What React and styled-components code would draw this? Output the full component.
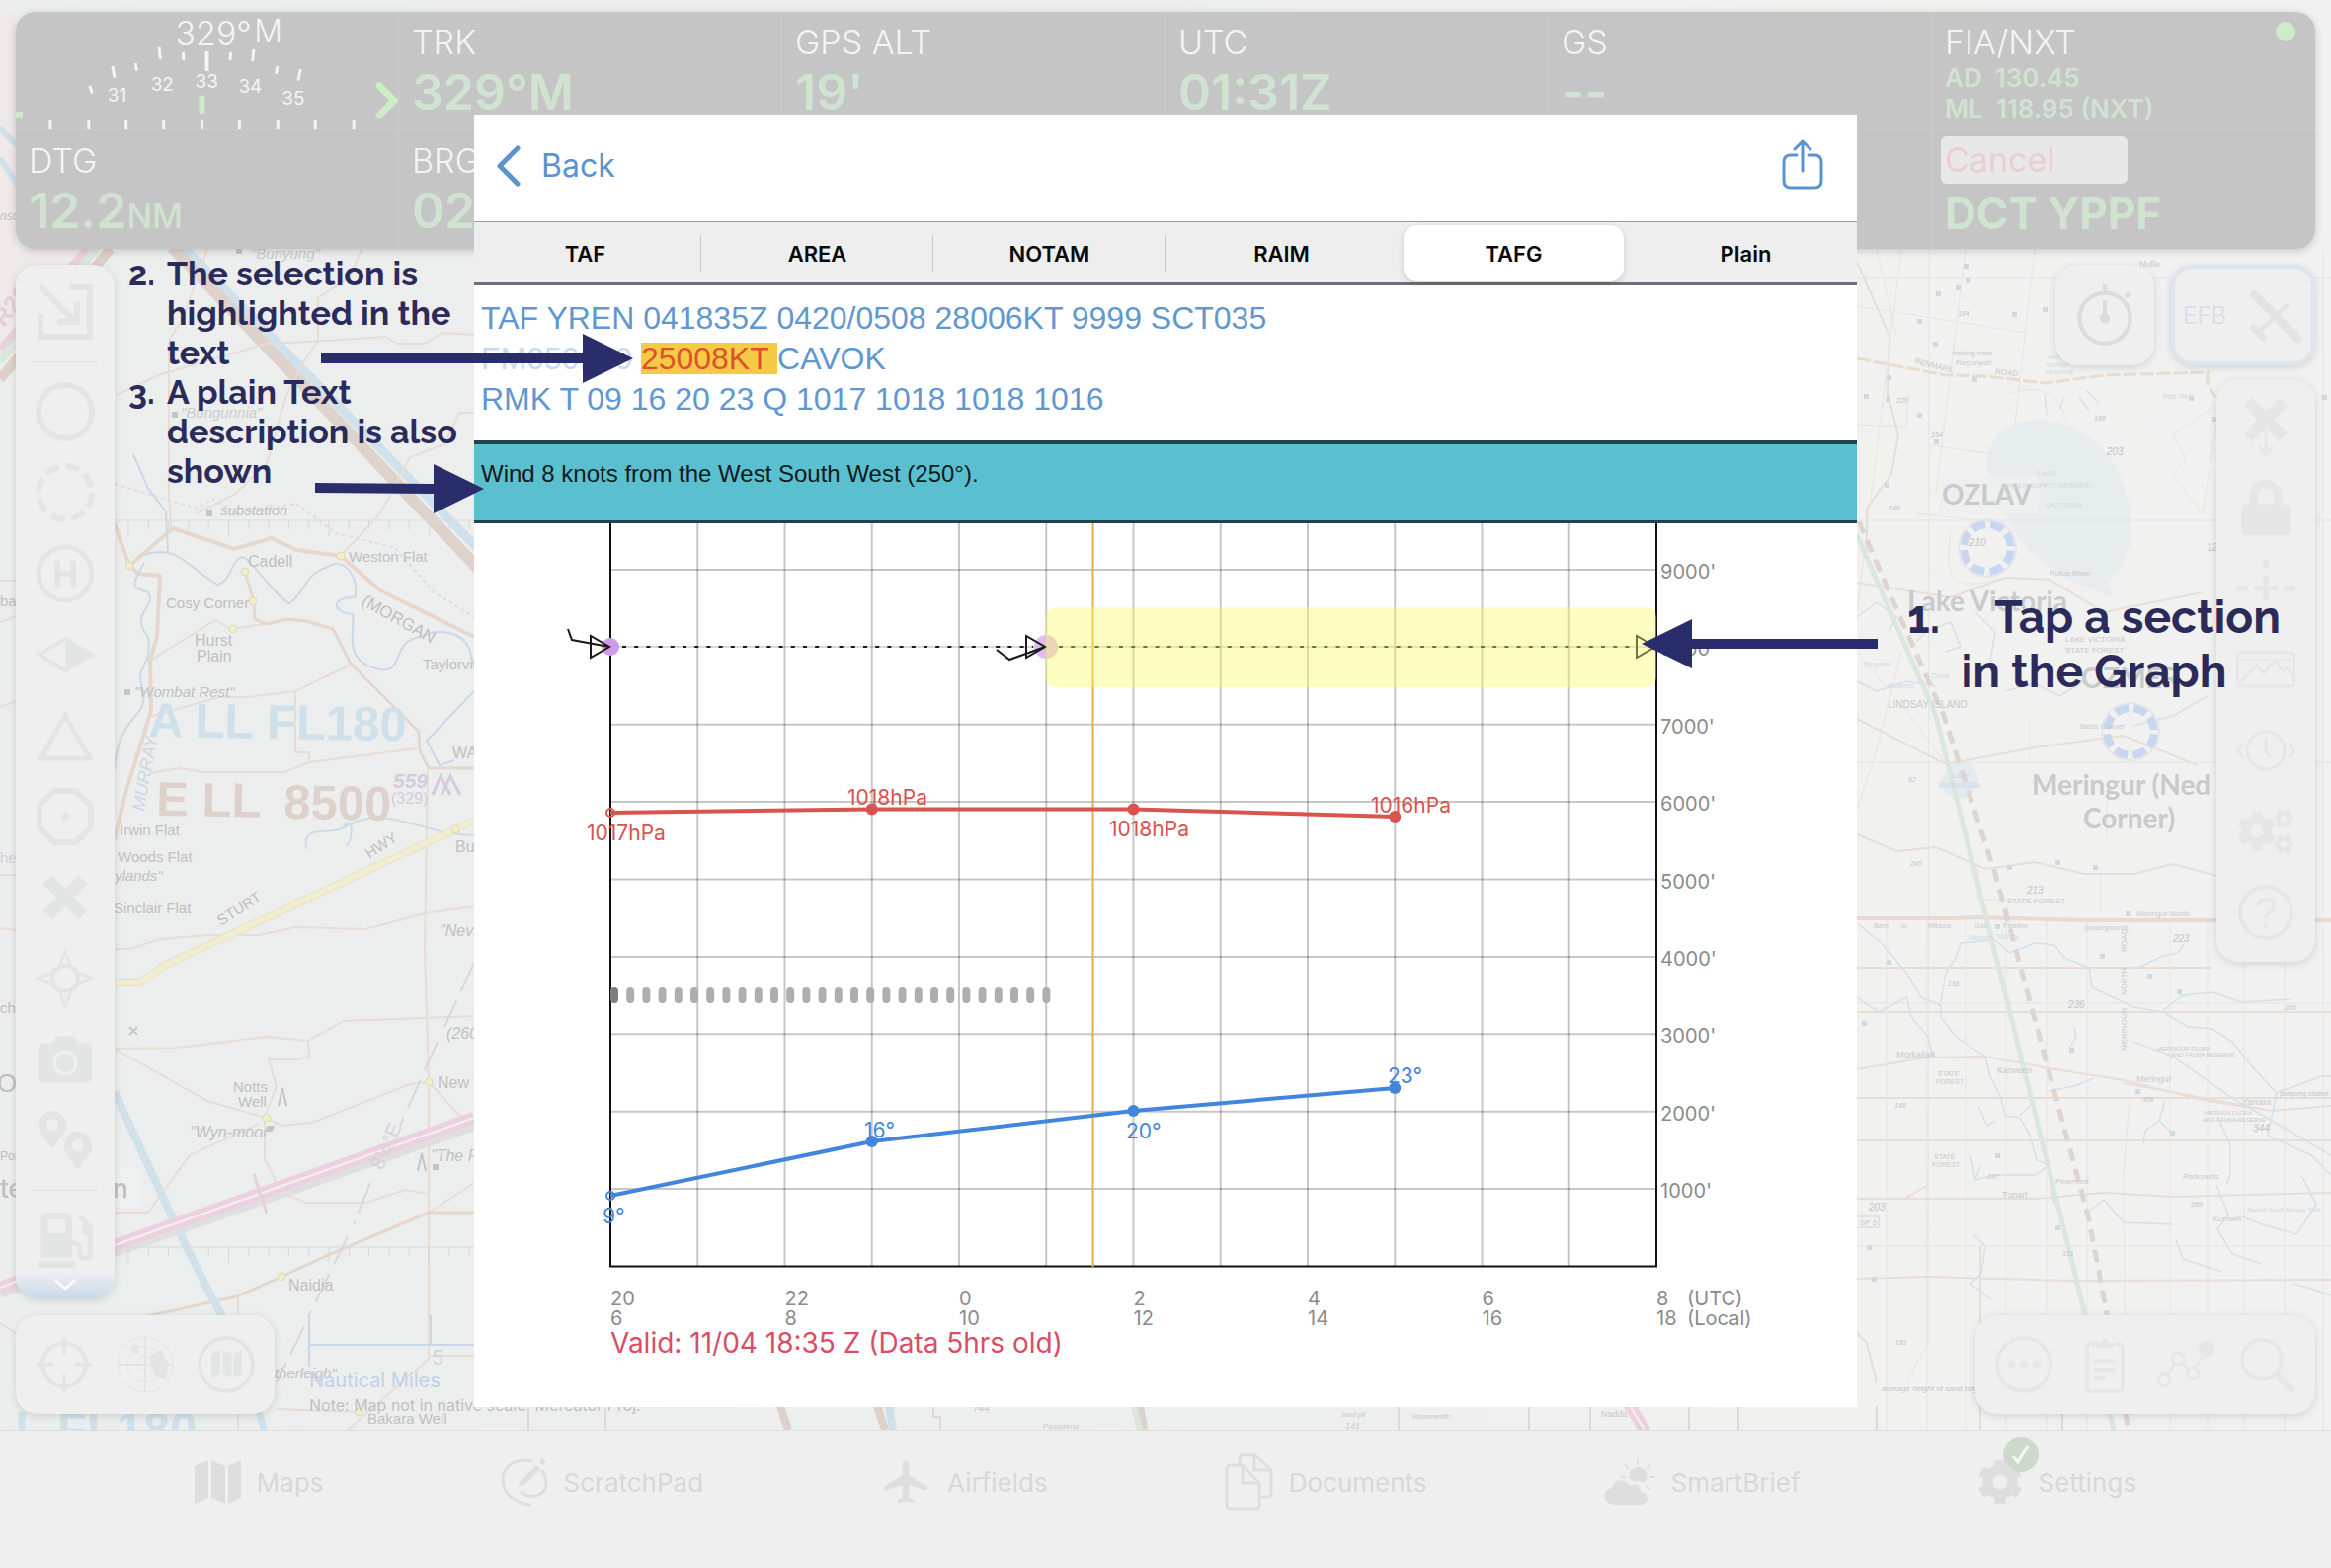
import React from 'react';
import styled, { createGlobalStyle, css } from 'styled-components';
import { FaCamera, FaCog, FaCogs, FaGasPump, FaLock, FaMapMarkerAlt } from 'react-icons/fa';
import { MdAirplanemodeActive } from 'react-icons/md';

const ui = `Inter, Roboto, "Liberation Sans", sans-serif`;
const arial = `"Liberation Sans", Arial, sans-serif`;
const note = `Raleway, Lato, "Open Sans", sans-serif`;
const navy = '#2a2d6b';

const Global = createGlobalStyle`
  *, *::before, *::after { box-sizing: border-box; }
  body { margin: 0; background: #edeeee; font-family: ${ui}; }
  button { font: inherit; color: inherit; background: none; border: 0; padding: 0; margin: 0; cursor: pointer; }
  ol { list-style: none; margin: 0; padding: 0; }
`;

const Screen = styled.div`
  position: relative;
  min-height: 100vh;
  display: grid;
  grid-template-rows: 1fr auto;
  overflow: hidden;
`;

const MapCanvas = styled.svg`
  position: absolute;
  inset: 0;
  width: 100%;
  height: 100%;
`;

const Stage = styled.main`
  position: relative;
  display: flex;
  flex-direction: column;
  gap: 16px;
  padding: 12px 16px 16px;
`;

/* ---------- instrument header ---------- */
const Instruments = styled.header`
  display: grid;
  grid-template-columns: repeat(6, 1fr);
  grid-auto-rows: 120px;
  background: #c5c5c5;
  border-radius: 20px;
  box-shadow: 0 2px 8px rgba(0, 0, 0, 0.18);
  overflow: hidden;
`;

const Cell = styled.div`
  position: relative;
  padding: ${(p) => (p.$flush ? '0' : '11px 0 0 13px')};
  border-right: ${(p) => (p.$last ? '0' : '1px solid #cccccc')};
  border-bottom: ${(p) => (p.$low ? '0' : '1px solid #cccccc')};
  white-space: nowrap;
`;

const CellLabel = styled.div`
  font-size: 34px;
  line-height: 40px;
  font-weight: 300;
  color: #f4f4f4;
`;

const CellValue = styled.div`
  font-size: ${(p) => (p.$route ? '44px' : '50px')};
  line-height: 60px;
  font-weight: ${(p) => (p.$route ? 700 : 600)};
  color: #d0e3d0;
  small { font-size: 34px; font-weight: 500; }
`;

const Frequency = styled.div`
  font-size: 26px;
  line-height: 31px;
  font-weight: 600;
  color: #d0e3d0;
  white-space: pre;
`;

const CancelButton = styled.button`
  display: block;
  width: 189px;
  height: 48px;
  margin-left: -4px;
  padding-left: 4px;
  border-radius: 6px;
  background: #e8e8e8;
  color: #ebcfcf;
  font-size: 34px;
  line-height: 48px;
  text-align: left;
`;

const RouteCell = styled(Cell)`
  padding-top: 6px;
`;

const StatusDot = styled.span`
  position: absolute;
  top: 10px;
  right: 20px;
  width: 20px;
  height: 20px;
  border-radius: 50%;
  background: #cdedc9;
`;

/* ---------- tool rails ---------- */
const Body = styled.div`
  flex: 1;
  display: flex;
  justify-content: space-between;
`;

const Side = styled.div`
  display: flex;
  flex-direction: column;
  align-items: ${(p) => (p.$end ? 'flex-end' : 'flex-start')};
  gap: 14px;
  color: ${(p) => (p.$end ? '#e6e6e6' : '#e3e4e4')};
`;

const surface = css`
  background: #efefef;
  border-radius: 22px;
  box-shadow: 0 2px 8px rgba(0, 0, 0, 0.13);
`;

const Rail = styled.nav`
  ${surface}
  width: 100px;
  display: flex;
  flex-direction: column;
  padding-top: 7px;
  padding-bottom: ${(p) => (p.$open ? '0' : '9px')};
  overflow: hidden;
`;

const Dock = styled.nav`
  ${surface}
  display: flex;
  height: 100px;
  padding: 0 8px;
  margin-top: auto;
`;

const ToolButton = styled.button`
  display: grid;
  place-items: center;
  flex: none;
  height: ${(p) => (p.$tall ? '100px' : '82px')};
  width: ${(p) => (p.$tall ? '82px' : '100%')};
  svg { display: block; }
`;

const Rule = styled.hr`
  width: 68px;
  margin: 9px auto;
  border: 0;
  border-top: 1px solid #e2e3e3;
`;

const MoreButton = styled.button`
  display: grid;
  place-items: center;
  height: 28px;
  margin-top: -10px;
  background: linear-gradient(#efefef, #c9d8ea);
`;

const Cards = styled.div`
  display: flex;
  gap: 17px;
`;

const CardButton = styled.button`
  ${surface}
  display: flex;
  align-items: center;
  justify-content: ${(p) => (p.$efb ? 'space-between' : 'center')};
  width: ${(p) => (p.$efb ? '146px' : '100px')};
  height: 102px;
  padding: ${(p) => (p.$efb ? '0 8px' : '0')};
  border: ${(p) => (p.$efb ? '4px solid #dde5ee' : '0')};
  color: #dcdcdc;
  span { color: #dbdfea; font-size: 24px; font-weight: 400; }
`;

/* ---------- bottom tab bar ---------- */
const TabBar = styled.nav`
  position: relative;
  display: flex;
  justify-content: center;
  gap: 179px;
  height: 140px;
  border-top: 1px solid #dddede;
  background: #efefef;
`;

const TabItem = styled.a`
  position: relative;
  display: flex;
  align-items: center;
  gap: 16px;
  height: 104px;
  color: #d8d8d8;
  font-size: 26px;
  text-decoration: none;
  svg { display: block; color: #dedede; }
`;

const Badge = styled.span`
  position: absolute;
  left: 26px;
  top: 6px;
  display: grid;
  place-items: center;
  width: 36px;
  height: 36px;
  border-radius: 50%;
  background: #cddacb;
`;

/* ---------- weather sheet ---------- */
const SheetLayer = styled.div`
  position: absolute;
  inset: 116px 0 auto;
  display: flex;
  justify-content: center;
`;

const Sheet = styled.section`
  width: 60%;
  max-width: 1400px;
  background: #ffffff;
  overflow: hidden;
`;

const SheetBar = styled.div`
  display: flex;
  align-items: center;
  justify-content: space-between;
  height: 109px;
  padding: 0 34px 4px 22px;
  border-bottom: 1px solid #9a9da0;
  color: #5b93d0;
`;

const BackButton = styled.button`
  display: flex;
  align-items: center;
  gap: 20px;
  font-size: 32px;
  line-height: 40px;
`;

const Segments = styled.div`
  display: grid;
  grid-template-columns: repeat(6, 1fr);
  height: 64px;
  margin: 0 -5px;
  padding-top: 3px;
  background: #eeeeee;
  border-bottom: 3px solid #6b7078;
`;

const Segment = styled.button`
  position: relative;
  height: 57px;
  margin: 0 6px;
  border-radius: 14px;
  font-size: 22px;
  font-weight: 600;
  color: #0a0a0a;
  ${(p) => p.$on && css`
    background: #ffffff;
    box-shadow: 0 2px 6px rgba(0, 0, 0, 0.15);
  `}
  ${(p) => p.$rule && css`
    &::after {
      content: '';
      position: absolute;
      top: 10px;
      bottom: 10px;
      right: -6px;
      width: 1px;
      background: #c9c9c9;
    }
  `}
`;

const Report = styled.div`
  padding: 13px 7px 21px;
  font-family: ${arial};
  font-size: 32px;
  line-height: 41px;
  color: #6197d0;
  white-space: nowrap;
`;

const Past = styled.span`
  color: #c9daed;
  text-decoration: line-through;
`;

const Picked = styled.mark`
  display: inline-block;
  line-height: 32px;
  white-space: pre;
  color: #e0502f;
  background: #f5cb45;
`;

const Plain = styled.p`
  margin: 0;
  height: 84px;
  padding: 15px 7px;
  border-top: 4px solid #24414e;
  border-bottom: 3px solid #24414e;
  background: #5abfce;
  color: #101a1c;
  font-family: ${arial};
  font-size: 24px;
  line-height: 30px;
`;

const Chart = styled.svg`
  display: block;
  width: 100%;
  height: auto;
`;

/* ---------- training notes ---------- */
const Arrows = styled.svg`
  position: absolute;
  inset: 0;
  width: 100%;
  height: 100%;
  pointer-events: none;
`;

const Steps = styled.ol`
  position: absolute;
  top: 257px;
  left: 130px;
  width: 345px;
  font-family: ${note};
  font-size: 34px;
  font-weight: 700;
  line-height: 40px;
  color: #2a2b5a;
  li { display: grid; grid-template-columns: 39px 1fr; }
`;

const FirstStep = styled.p`
  position: absolute;
  top: 598px;
  right: 51px;
  margin: 0;
  font-family: ${note};
  font-size: 46px;
  font-weight: 700;
  line-height: 55px;
  color: #2a2b5a;
  text-align: center;
  span { margin-right: 55px; }
`;

/* ---------- icons ---------- */
const Ico = ({ s = 60, w = 5, children }) => (
  <svg width={s} height={s} viewBox="0 0 60 60" fill="none" stroke="currentColor" strokeWidth={w} aria-hidden="true">
    {children}
  </svg>
);

const dashRing = (r, n, share) => {
  const c = (2 * Math.PI * r) / n;
  return `${c * share} ${c * (1 - share)}`;
};

const slabs = 'M0 6L14 0V38L0 44ZM17 0L31 6V44L17 38ZM34 6L47 0V38L34 44Z';

const MapsIcon = () => (
  <svg width="47" height="44" viewBox="0 0 47 44" fill="currentColor" aria-hidden="true"><path d={slabs} /></svg>
);

const leftTools = [
  ['Ring', <Ico w={6}><circle cx="30" cy="30" r="27" /></Ico>],
  ['Dashed ring', <Ico w={6}><circle cx="30" cy="30" r="27" strokeDasharray={dashRing(27, 8, 0.68)} /></Ico>],
  ['Helipad', <Ico w={5}><circle cx="30" cy="30" r="27" /><path d="M22 17v26M38 17v26M22 30h16" strokeWidth="6" /></Ico>],
  ['Reporting point', <Ico w={4}><path d="M3 30L30 14L57 30L30 46Z" /><path d="M30 13L58 30L30 47Z" fill="currentColor" stroke="none" /></Ico>],
  ['Triangle', <Ico w={5}><path d="M30 10L55 53H5Z" /></Ico>],
  ['Octagon', <Ico w={6}><path d="M19 4H41L56 19V41L41 56H19L4 41V19Z" /><circle cx="30" cy="30" r="4" fill="currentColor" stroke="none" /></Ico>],
  ['Cross', <Ico w={13}><path d="M12 12L48 48M48 12L12 48" /></Ico>],
  ['Waypoint', <Ico w={4}><circle cx="30" cy="30" r="13" /><path d="M30 2L36 18Q42 20 43 24L58 30L43 36Q42 40 36 43L30 58L24 43Q18 40 17 36L2 30L17 24Q18 20 24 18Z" strokeWidth="3" /></Ico>],
  ['Camera', <FaCamera size={54} />],
  ['Pins', <Ico><g stroke="none" fill="currentColor"><FaMapMarkerAlt x={-2} y={0} size={38} /><FaMapMarkerAlt x={24} y={21} size={38} /></g></Ico>],
];

const rightTools = [
  ['Drop', <Ico w={12}><path d="M12 5L48 41M48 5L12 41" /><path d="M30 34V54M23 50L30 58L37 50" strokeWidth="3" /></Ico>],
  ['Lock', <FaLock size={56} />],
  ['Crosshair', <Ico w={5}><path d="M30 0v10M30 17v26M30 50v10M0 30h12M18 30h24M48 30h12" /></Ico>],
  ['Terrain', <Ico w={3}><rect x="1" y="13" width="58" height="34" rx="4" /><path d="M3 44L20 26L28 34L40 20L47 32L52 28L58 38" /><path d="M3 20H57" strokeDasharray="5 3" strokeWidth="2" /></Ico>],
  ['Time', <Ico w={3}><circle cx="30" cy="30" r="19" /><path d="M30 17V31L35 37M7 23L1 30L7 37M53 23L59 30L53 37" /></Ico>],
  ['Options', <FaCogs size={56} />],
  ['Help', <Ico w={4}><circle cx="30" cy="30" r="26" /><path d="M22 24Q23 17 30 17Q38 17 38 24Q38 28 33 31Q30 33 30 37M30 42v4" /></Ico>],
];

const leftDock = [
  ['Centre', <Ico w={4}><circle cx="30" cy="30" r="22" /><path d="M30 2V20M30 40V58M2 30H20M40 30H58" /></Ico>],
  ['Radar', <Ico w={1}><circle cx="30" cy="30" r="28" /><circle cx="30" cy="30" r="18" /><circle cx="30" cy="30" r="8" /><path d="M30 2V58M2 30H58" strokeWidth="2" /><path d="M34 22L46 14L54 30L50 46L40 42Z" fill="currentColor" stroke="none" /><circle cx="20" cy="14" r="4" fill="currentColor" /></Ico>],
  ['Chart', <Ico w={4}><circle cx="30" cy="30" r="27" /><path d={slabs} fill="currentColor" stroke="none" transform="translate(15 15) scale(0.66)" /></Ico>],
];

const rightDock = [
  ['More', <Ico w={4}><circle cx="30" cy="30" r="27" /><g fill="currentColor" stroke="none"><circle cx="17" cy="30" r="4" /><circle cx="30" cy="30" r="4" /><circle cx="43" cy="30" r="4" /></g></Ico>],
  ['Plan', <Ico w={4}><path d="M20 9H16Q12 9 12 13V53Q12 57 16 57H44Q48 57 48 53V13Q48 9 44 9H40M19 26H41M19 35H41M19 44H31" /><path d="M21 13V8H26Q30 -1 34 8H39V13Z" fill="currentColor" stroke="none" /></Ico>],
  ['Route', <Ico w={3}><circle cx="8" cy="46" r="6" /><circle cx="22" cy="24" r="6" /><circle cx="37" cy="39" r="6" /><circle cx="51" cy="14" r="7" fill="currentColor" /><path d="M11 41L19 29M26 28L33 35M39 33L48 20" /></Ico>],
  ['Search', <Ico w={4}><circle cx="25" cy="25" r="20" /><path d="M39 40L57 57" strokeWidth="6" /></Ico>],
];

const ScratchIcon = () => (
  <svg width="48" height="50" viewBox="0 0 48 50" fill="none" stroke="currentColor" strokeWidth="3" strokeLinecap="round" aria-hidden="true">
    <path d="M29 48C12 45 2 36 2 22C3 8 16 0 31 4" />
    <path d="M42 14C49 26 46 35 38 38C31 41 26 40 21 35" />
    <path d="M17 30L20 24L36 8L40 12L24 28ZM39 5L42 1L46 4L43 8Z" fill="currentColor" stroke="none" />
  </svg>
);

const DocsIcon = () => (
  <svg width="49" height="58" viewBox="0 0 49 58" fill="none" stroke="currentColor" strokeWidth="3" aria-hidden="true">
    <path d="M15 11V6Q15 2 19 2H31L47 17V40Q47 44 43 44H37M30 2V17H46" />
    <path d="M2 16Q2 12 6 12H18L35 30V52Q35 56 31 56H6Q2 56 2 52ZM18 12V30H34" />
  </svg>
);

const BriefIcon = () => (
  <svg width="52" height="46" viewBox="0 0 52 46" fill="currentColor" aria-hidden="true">
    <path d="M10 46C-2 45 -3 31 8 29C9 20 22 18 26 27C30 24 37 26 37 33C47 35 46 45 37 46Z" />
    <path d="M26 20A9 9 0 1 1 40 24C38 22 34 21 30 23C29 21 28 21 26 20Z" />
    <path d="M34 0V6M21 5L25 10M47 5L43 10M17 18H22M46 18H52M43 26L47 31" stroke="currentColor" strokeWidth="2" />
  </svg>
);

const tabs = [
  ['Maps', <MapsIcon />],
  ['ScratchPad', <ScratchIcon />],
  ['Airfields', <MdAirplanemodeActive size={52} />],
  ['Documents', <DocsIcon />],
  ['SmartBrief', <BriefIcon />],
  ['Settings', <FaCog size={46} />],
];

const Compass = () => {
  const long = [[115, 108, -11], [162, 89, -6], [257, 91, 6], [304, 111, 12]];
  const short = [[92, 118, -16], [138, 95, -9], [186, 84, -3], [234, 84, 4], [281, 98, 9]];
  return (
    <svg width="100%" height="119" viewBox="16 12 388 119" preserveAspectRatio="xMinYMin meet" fontFamily="Inter, sans-serif" fill="#f4f4f4" role="img" aria-label="Heading 329 magnetic">
      <text x="178" y="46" fontSize="34" fontWeight="300">329°</text>
      <text x="258" y="43" fontSize="32" fontWeight="300">M</text>
      <g stroke="#f4f4f4" strokeWidth="3">
        {long.map(([x, y, a]) => <path key={x} d={`M${x} ${y - 41}v12`} transform={`rotate(${a} ${x} ${y - 36})`} />)}
        {short.map(([x, y, a]) => <path key={x} d={`M${x} ${y - 31}v8`} transform={`rotate(${a} ${x} ${y - 28})`} />)}
        <path d="M210 52v20" strokeWidth="4" />
        {[51, 90, 128, 166, 205, 243, 282, 320, 359].map((x) => <path key={x} d={`M${x} 122v12`} />)}
      </g>
      <path d="M205 97v18M16 116h7" stroke="#cdebc9" strokeWidth="6" />
      <g fontSize="19">
        <text x="109" y="103">31</text>
        <text x="153" y="92">32</text>
        <text x="198" y="89">33</text>
        <text x="242" y="94">34</text>
        <text x="286" y="106">35</text>
      </g>
      <path d="M385 87L400 102L385 117" fill="none" stroke="#cdedc4" strokeWidth="7" strokeLinecap="round" />
    </svg>
  );
};

/* ---------- background chart ---------- */
const Ring = ({ x, y }) => (
  <g>
    <circle cx={x} cy={y} r="24" fill="none" stroke="#c8d7f0" strokeWidth="8" strokeDasharray={dashRing(24, 8, 0.72)} transform={`rotate(6 ${x} ${y})`} />
    <circle cx={x} cy={y} r="29" fill="none" stroke="#e4e6e8" strokeWidth="2" />
  </g>
);

const ticks = (y) => Array.from({ length: 19 }, (_, i) => `M${130 + i * 20.3} ${y}v${i % 5 ? 9 : 16}`).join('');

const Label = ({ at, size = 16, color = '#bfc0c0', children, ...rest }) => (
  <text x={at[0]} y={at[1]} fontSize={size} fill={color} {...rest}>{children}</text>
);

const towns = [[131, 573], [248, 579], [345, 563], [256, 609], [236, 637], [461, 840], [434, 1096], [270, 1132], [285, 1293], [363, 1430]];
const tanks = [[1990, 269], [1992, 284], [1982, 291], [1962, 297], [2039, 318], [2070, 313], [1943, 325], [1959, 348], [1999, 384], [1912, 382], [1889, 401], [1911, 404], [1943, 420], [1960, 447], [1910, 491], [2218, 403], [2242, 424], [2353, 402], [2034, 878], [2083, 873], [2121, 878], [2022, 938], [2154, 925], [2128, 968], [2176, 988], [2206, 1004], [1912, 974], [2097, 1063], [1956, 1067], [1887, 1036], [2164, 1105], [2199, 1147], [2022, 1170], [1892, 1263], [1897, 1295], [2083, 1243]];

const Backdrop = () => (
  <MapCanvas viewBox="0 0 2360 1588" preserveAspectRatio="xMidYMid slice" fill="none" fontFamily='"Liberation Sans", sans-serif' aria-hidden="true">
    <defs>
      <linearGradient id="land" x1="0" x2="1">
        <stop offset="0" stopColor="#eceeed" />
        <stop offset="0.5" stopColor="#edeeee" />
        <stop offset="0.8" stopColor="#f1f1f0" />
        <stop offset="1" stopColor="#f1f1f1" />
      </linearGradient>
    </defs>
    <rect width="2360" height="1588" fill="url(#land)" />
    <path d="M0 12H16V252H95L0 360Z" fill="#efe9e9" />
    <path d="M0 354L88 252" stroke="#e8d2dc" strokeWidth="8" />
    <path d="M0 366L98 252" stroke="#dbe8df" strokeWidth="8" />
    <path d="M0 384L112 252" stroke="#ddd0c8" strokeWidth="10" />
    <path d="M0 130L20 150M0 160L24 196" stroke="#cfe0ea" strokeWidth="6" />
    <path d="M186 250L490 562" stroke="#d1e1ec" strokeWidth="9" />
    <path d="M174 250L490 582" stroke="#ded3cc" strokeWidth="12" />

    <g stroke="#e8ddd5" strokeWidth="2">
      <path d="M210 252L186 320L171 345V500L173 534M366 252L355 280L322 302V345L305 370L290 400L270 470L238 500L200 520" />
      <path d="M118 400L160 380L270 348L330 345L390 341L402 348H430L447 337L480 339M480 418H465L450 450L415 463L385 520L345 563" />
      <path d="M152 669L218 628L233 637L268 632M152 726L222 706L250 706L299 700L355 673M299 700V762H313V772L422 758M152 783L182 778L206 782H288L313 772M355 673L340 640" />
      <path d="M116 961H132L162 951L210 947H262L300 939L370 941L430 925L480 918M433 780L430 960L434 1096V1376L350 1450" />
      <path d="M116 1062L180 1061L270 1050L312 1054M116 1062L210 1115L268 1132L285 1140L316 1137L415 1098L434 1096L480 1145M268 1132V1174L285 1208L310 1218H370L410 1205L434 1209" />
      <path d="M312 1054L348 1034L480 1029M312 1054L313 1070L302 1073H272L280 1100L268 1132M116 1228H150L192 1170L262 1138M434 1228L480 1198M241 1314V1450M280 1427L363 1430M434 1373H480" />
      <path d="M0 588H16M0 630L16 624M0 716L16 710M0 886H16M0 940L16 942M0 1340L16 1350M1880 980H2240M1880 1025H2360M1880 1112H2360M1880 1155H2360" />
    </g>
    <g stroke="#e6d7cd" strokeWidth="5" strokeLinejoin="round">
      <path d="M116 530L131 573L175 535L237 556L275 545L300 557L345 563L385 598L480 645M131 573L140 581L162 583L159 645L152 669L153 720L128 800L116 850" strokeWidth="4" />
      <path d="M248 579L257 609L258 627L270 632L290 627L310 629L337 637L355 672L424 741L425 760L434 778H480" strokeWidth="3" />
      <path d="M140 1335L240 1313L285 1293L330 1272L434 1228H480" strokeWidth="3" />
    </g>
    <path d="M135 460L150 495L168 518L170 560M146 570C135 590 130 595 150 600C160 615 130 620 150 645C155 680 135 670 145 700C150 730 120 720 116 780M146 562C180 550 190 575 220 592C235 590 235 560 248 565C265 580 280 605 293 611C305 605 310 580 330 575C350 560 365 590 359 605C335 605 335 620 357 622C360 640 345 670 385 678C410 682 395 650 425 645C445 635 470 640 476 660L480 675M480 700L432 750L445 775L460 770" stroke="#c9d9e6" strokeWidth="2" />
    <path d="M310 860C305 830 340 850 350 835C360 825 355 860 350 855M345 840C390 810 420 845 480 846" stroke="#cddbe6" strokeWidth="2" />
    <path d="M116 490L200 515L215 505L240 520L300 510L340 540L400 555L440 600L480 625" stroke="#e0dae4" strokeWidth="2" strokeDasharray="4 3" />
    <path d="M116 995L142 995L166 978L480 831" stroke="#e2e0cd" strokeWidth="8" />
    <path d="M116 995L142 995L166 978L480 831" stroke="#f1eed0" strokeWidth="6" />
    <path d="M116 1106C150 1180 190 1270 226 1335" stroke="#d0e1ea" strokeWidth="8" />
    <path d="M0 1310L116 1268L480 1140" stroke="#e0dfdf" strokeWidth="10" />
    <path d="M0 1304L116 1261L480 1132" stroke="#ebd0df" strokeWidth="12" />
    <path d="M0 1304L116 1261L480 1132" stroke="#f6eef3" strokeWidth="2" />
    <path d="M257 1189L270 1229" stroke="#e8cfdc" strokeWidth="3" />
    <path d="M480 975L450 1040M443 1055L405 1140M375 1198L358 1240M352 1252L313 1332M308 1343L280 1400" stroke="#d9d6e1" strokeWidth="2" strokeDasharray="32 10" />
    <path d={`M116 527H480M116 1263H480${ticks(527)}${ticks(1263)}`} stroke="#d6d9d9" strokeWidth="1" />
    <g fill="#f0eec4" stroke="#dcdabf" strokeWidth="1">
      {towns.map(([x, y]) => <circle key={`${x}${y}`} cx={x} cy={y} r="4" />)}
    </g>
    <path d="M239 251h6v6h-6zM174 417h6v6h-6zM209 517h6v6h-6zM126 698h6v6h-6zM270 1140h6v6h-6zM438 1179h6v6h-6z" fill="#c4c6c6" />
    <path d="M131 1040l8 8m0 -8l-8 8M282 1120l4-18l4 18M423 1186l4-18l4 18" stroke="#c4c6c6" strokeWidth="2" />
    <path d="M438 805L446 786L456 805M447 805L456 786L466 805" stroke="#d5cbdd" strokeWidth="3" />

    <g fontStyle="italic">
      <Label at={[254, 262]} size={15} color="#cbcccc">"Bunyung"</Label>
      <Label at={[183, 423]} size={15} color="#cbcccc">"Bungunnia"</Label>
      <Label at={[223, 522]} size={15}>substation</Label>
      <Label at={[136, 706]} size={15}>"Wombat Rest"</Label>
      <Label at={[116, 892]} size={15}>ylands"</Label>
      <Label at={[445, 948]}>"Neva</Label>
      <Label at={[192, 1152]}>"Wyn-moor"</Label>
      <Label at={[436, 1176]}>"The Fo</Label>
      <Label at={[278, 1396]} size={15}>therleigh"</Label>
      <Label at={[452, 1052]}>(260</Label>
      <Label at={[398, 798]} size={21} color="#d5cbdd" fontWeight="700">559</Label>
      <Label at={[146, 822]} size={18} color="#c9d7e2" transform="rotate(-80 146 822)">MURRAY</Label>
    </g>
    <Label at={[251, 574]}>Cadell</Label>
    <Label at={[353, 569]} size={15}>Weston Flat</Label>
    <Label at={[168, 616]} size={15}>Cosy Corner</Label>
    <Label at={[197, 654]}>Hurst</Label>
    <Label at={[199, 670]}>Plain</Label>
    <Label at={[428, 678]} size={15}>Taylorville</Label>
    <Label at={[458, 768]}>WAI</Label>
    <Label at={[121, 846]} size={15}>Irwin Flat</Label>
    <Label at={[119, 873]} size={15}>Woods Flat</Label>
    <Label at={[115, 925]} size={15}>Sinclair Flat</Label>
    <Label at={[461, 863]}>Burr</Label>
    <Label at={[236, 1106]} size={15}>Notts</Label>
    <Label at={[241, 1121]} size={15}>Well</Label>
    <Label at={[443, 1102]}>New Well</Label>
    <Label at={[292, 1307]}>Naidia</Label>
    <Label at={[372, 1442]} size={15}>Bakara Well</Label>
    <Label at={[365, 612]} size={17} transform="rotate(29 365 612)">(MORGAN</Label>
    <Label at={[224, 938]} size={15} transform="rotate(-33 224 938)">STURT</Label>
    <Label at={[374, 870]} size={15} transform="rotate(-33 374 870)">HWY</Label>
    <Label at={[396, 814]} color="#d5cbdd">(329)</Label>
    <Label at={[387, 1186]} size={20} color="#d5d2dc" transform="rotate(-66 387 1186)">8½°E</Label>
    <Label at={[0, 614]} size={15}>ba</Label>
    <Label at={[0, 874]} size={15} color="#d5cbdd">he</Label>
    <Label at={[0, 1026]} size={15}>ch</Label>
    <Label at={[-3, 1106]} size={26}>O</Label>
    <Label at={[0, 1175]} size={12}>Por</Label>
    <Label at={[0, 223]} size={12} fontStyle="italic">nsc</Label>
    <Label at={[4, 332]} size={24} color="#e6cdd8" fontWeight="700" transform="rotate(-52 4 332)">R26</Label>
    <g fontWeight="700" fontSize="49">
      <text x="150" y="746" fill="#cfe0ea" transform="rotate(1 150 746)">A LL FL180</text>
      <text x="158" y="826" fill="#ddd1cc" transform="rotate(1 158 826)">E LL</text>
      <text x="287" y="829" fill="#ddd1cc" transform="rotate(1 287 829)">8500</text>
      <text x="58" y="1464" fill="#d0e0e9">FL180</text>
    </g>
    <path d="M22 1430V1450M262 1430L268 1450" stroke="#d0e0e9" strokeWidth="7" />
    <g fontFamily="Inter, sans-serif">
      <rect x="100" y="1183" width="43" height="40" rx="4" fill="#eff0f0" />
      <Label at={[0, 1213]} size={26} fontWeight="500">te</Label>
      <Label at={[114, 1213]} size={26} fontWeight="500">n</Label>
      <path d="M313 1332V1384M313 1362H480M436 1332V1362" stroke="#c8d7e8" strokeWidth="2" />
      <Label at={[437, 1382]} size={20} color="#c8d7e8">5</Label>
      <Label at={[313, 1405]} size={20} color="#c0d2e8">Nautical Miles</Label>
      <Label at={[313, 1429]}>Note: Map not in native scale. Mercator Proj.</Label>
    </g>

    <path d="M2012 480C2010 430 2045 420 2085 428C2130 440 2155 480 2157 530C2157 575 2140 580 2135 590L2140 605L2115 595C2080 585 2040 550 2030 520Z" fill="#e7ecef" />
    <path d="M1965 790C1975 765 2000 765 2003 790C2003 815 1965 815 1965 790Z" fill="#e4ebef" />
    <g stroke="#e9e3de" strokeWidth="1">
      {[1910, 1951, 1990, 2031, 2072, 2113, 2197, 2235, 2272, 2313].map((x) => <path key={x} d={`M${x} 930V1448`} />)}
      {[282, 527, 772, 1016, 1262].map((y) => <path key={y} d={`M1880 ${y}H2360`} stroke="#e2e3e3" />)}
      <path d="M1953 252L1952 1360L1930 1400M2157 300V1100M2352 252V1448M2157 1098L2150 1190L2152 1448M1900 252L1920 340M1925 252L1880 620M1990 252L1960 500M2060 252L2040 430M1880 310L2052 337M1880 430L1930 432L1932 400M1950 450L2018 460M1940 520L2030 530" />
      <path d="M2244 410L2200 440L2213 465L2200 480L2230 520L2244 430M1880 660L1930 720L1970 774M1925 660L1900 760L1880 820M2055 728V772M2003 870L2002 910L2030 912M2127 880V925M2133 850V800M2030 400C2080 380 2090 420 2092 425M1975 540C1965 600 1990 595 2030 585" />
    </g>
    <g stroke="#e8ded7" strokeWidth="2">
      <path d="M1880 265L1913 340L1911 400L1922 440L1915 480L1890 515V560M1880 590L1975 605L2030 585L2075 587L2130 620L2230 600" />
      <path d="M1880 845L1920 862L1960 858L2010 880L2060 873L2110 885H2160L2200 875L2245 887M1880 1083L1950 1071L2010 1070L2075 1082L2150 1094L2235 1115L2300 1125L2360 1120M2150 1097L2290 1123M1880 728L1970 774L2060 757L2150 745L2225 775" />
      <path d="M1880 1295L1950 1293L2100 1297L2360 1296M1880 1214H2060L2130 1208L2200 1212L2360 1208M1930 1213L1952 1200M2005 1262V1448M1900 1400L1890 1360L1875 1345" />
    </g>
    <path d="M1880 363L1970 380L2010 381L2070 388L2130 380L2235 377L2235 388L2243 402" stroke="#e9dccf" strokeWidth="3" strokeDasharray="14 3" />
    <path d="M1880 930H1980L2000 929L2110 932H2360" stroke="#e6dad1" strokeWidth="4" />
    <g stroke="#d5e0e7" strokeWidth="1.5">
      <path d="M1880 935L1905 955L1930 985L1945 1010L1965 1018V1030L1980 1050L2010 1070L2015 1090L2025 1110L2030 1130L2045 1132L2055 1150L2062 1175L2075 1180L2060 1190H2020L2000 1195M1880 1010L1902 1025L1930 1010L1935 1030L1952 1050L1956 1066" />
      <path d="M1965 1015L1970 985L1980 970L1985 955L2020 952L2035 965L2060 955L2080 957L2090 970L2115 980L2118 1000L2160 1020L2190 1025L2215 1040L2240 1042L2260 1055L2280 1080L2305 1107L2350 1090H2360" />
      <path d="M2160 1055L2200 1070L2260 1112L2300 1135L2360 1170M2190 1023L2210 1008L2240 1005L2270 1015L2320 1012M2165 980L2190 968L2205 965L2212 955M2205 1005L2212 1010M2192 1115L2186 1135L2172 1145L2170 1158M2186 1135L2198 1147M2245 1130L2258 1160V1190L2254 1200M2003 1120L2012 1140L2020 1135M2100 1040L2102 1050L2095 1062M2075 1105L2100 1100L2120 1092" />
      <path d="M1880 625L1900 610L1920 625L1912 640M1880 690L1900 700L1930 690L1960 695M1940 650L1950 640L1975 630L1985 655L1970 660M2000 620L2020 640L2015 670M2030 700L2060 692L2085 705L2110 690M2160 735L2200 725L2235 705M2070 400L2072 420M2090 402L2085 415M2112 395L2125 408M2105 402L2115 416M2305 1107L2296 1150L2340 1170L2360 1190M1995 1170L2000 1195L2005 1180M1998 1250L2010 1262L2006 1290L1995 1300L2016 1316M2060 1115L2045 1130" />
      <path d="M2244 1200L2256 1230L2245 1245L2260 1270L2290 1280M2330 1190L2345 1220L2325 1250L2290 1240L2270 1232M2075 1195L2080 1220M2110 1230L2130 1215L2150 1238L2200 1240M2203 1255L2210 1275L2250 1288M2322 1300L2340 1305L2360 1312" />
    </g>
    <path d="M1880 542L1960 725L2140 1448" stroke="#dbe7de" strokeWidth="5" />
    <path d="M1882 528L1915 605L1968 725L2020 885L2115 1235L2155 1448" stroke="#dfd5cf" strokeWidth="5" strokeDasharray="13 8" />
    <g fill="#cddae2">
      {tanks.map(([x, y]) => <rect key={`${x}-${y}`} x={x - 2} y={y - 2} width="5" height="5" />)}
    </g>
    <rect x="1963" y="481" width="101" height="40" rx="5" fill="#eeefef" />
    <Ring x={2012} y={555} />
    <Ring x={2157} y={741} />
    <g fontFamily="Lato, sans-serif" fontWeight="700" fontSize="28" fill="#c9cacb">
      <text x="1966" y="511">OZLAV</text>
      <text x="1931" y="619">Lake Victoria</text>
      <text x="2107" y="697">OZMER</text>
      <text x="2057" y="805">Meringur (Ned</text>
      <text x="2109" y="839">Corner)</text>
    </g>
    <g fontStyle="italic" fill="#c2c3c4" fontSize="10">
      <text x="2133" y="461">203</text>
      <text x="1994" y="553">210</text>
      <text x="2234" y="558">12</text>
      <text x="2052" y="905">213</text>
      <text x="2200" y="954">223</text>
      <text x="2094" y="1021">236</text>
      <text x="2281" y="1146">344</text>
      <text x="1892" y="1226">203</text>
      <text x="1905" y="1409" fontSize="8">average height of sand ridges 11 metres</text>
      <g fontSize="7">
        <text x="1982" y="320">184</text><text x="1920" y="408">220</text><text x="2120" y="426">188</text>
        <text x="1955" y="443">164</text><text x="1912" y="517">148</text><text x="1932" y="792">92</text>
        <text x="1934" y="877">245</text><text x="1972" y="999">191</text><text x="2313" y="1023">203</text>
        <text x="1918" y="1122">148</text><text x="2169" y="1116">308</text><text x="2012" y="1194">187</text>
        <text x="2218" y="1222">269</text><text x="1919" y="1362">181</text><text x="2088" y="1272">151</text>
        <text x="2308" y="1110">pumping station</text>
      </g>
    </g>
    <g fill="#c8c9c9" fontSize="9">
      <text x="2166" y="270">Nulla</text>
      <text x="1977" y="360" fontSize="7">training track</text>
      <text x="1980" y="370" fontSize="8">Regunyah</text>
      <text x="1938" y="368" transform="rotate(14 1938 368)" fontSize="8">RENMARK</text>
      <text x="2020" y="379" transform="rotate(6 2020 379)" fontSize="8">ROAD</text>
      <text x="2075" y="583" fontSize="8">Rufus River</text>
      <text x="2091" y="650" fontSize="8">LAKE VICTORIA</text>
      <text x="2091" y="661" fontSize="8">STATE FOREST</text>
      <text x="1911" y="717" fontSize="10">LINDSAY ISLAND</text>
      <text x="2106" y="738" fontSize="8">Neds Corner</text>
      <text x="2032" y="915" fontSize="8">STATE FOREST</text>
      <text x="2163" y="928" fontSize="8">Meringur North</text>
      <text x="1920" y="1071">Morkalla</text>
      <text x="2022" y="1087">Karween</text>
      <text x="2163" y="1096">Meringur</text>
      <text x="2270" y="1119">Yarrara</text>
      <text x="2027" y="1213">Tunart</text>
      <text x="2081" y="1199" fontSize="8">Pinemont</text>
      <text x="2210" y="1194" fontSize="8">Radcourts</text>
      <text x="2241" y="1237" fontSize="8">Kurnwill</text>
      <text x="1962" y="1090" fontSize="7">STATE</text><text x="1960" y="1098" fontSize="7">FOREST</text>
      <text x="1958" y="1174" fontSize="7">STATE</text><text x="1956" y="1182" fontSize="7">FOREST</text>
      <text x="2184" y="1064" fontSize="6">MERINGUR FLORA</text><text x="2198" y="1070" fontSize="6">AND FAUNA RESERVE</text>
      <text x="2230" y="1129" fontSize="6">YARRARA FLORA</text><text x="2230" y="1136" fontSize="6">AND FAUNA RESERVE</text>
      <text x="1897" y="940" fontSize="7">Berri</text><text x="1925" y="940" fontSize="7">to</text><text x="1952" y="940" fontSize="7">Mildura</text>
      <text x="1999" y="940" fontSize="7">Gas</text><text x="2028" y="940" fontSize="7">Pipeline</text>
      <text x="2110" y="942" fontSize="7">(underground)</text>
      <text x="2153" y="964" transform="rotate(-90 2153 964)" fontSize="8">ROAD</text>
      <text x="2153" y="1008" transform="rotate(-90 2153 1008)" fontSize="8">NORTH</text>
      <text x="2153" y="1064" transform="rotate(-90 2153 1064)" fontSize="8">MERINGUR</text>
      <text x="1621" y="1435">Nadda</text>
      <text x="1056" y="1447" fontSize="8">Pasadena</text>
      <text x="1430" y="1437" fontSize="8">Roseneath</text>
      <text x="1358" y="1435" fontSize="7" fontStyle="italic">sand pit</text>
      <text x="985" y="1430" fontSize="10" fontStyle="italic">744</text>
      <text x="1362" y="1447" fontSize="9" fontStyle="italic">141</text>
      <rect x="1876" y="1232" width="26" height="11" fill="none" stroke="#dccfcf" />
      <text x="1883" y="1241" fontSize="8">SP 6</text>
    </g>
    <g fill="#ccdae3" fontSize="8">
      <text x="2062" y="482">LAKE</text>
      <text x="2026" y="494" fontSize="7">(WATER SUPPLY RESERVE)</text>
      <text x="2071" y="514">VICTORIA</text>
      <text x="2073" y="364" fontSize="6">WATER</text><text x="2071" y="372" fontSize="6">SUPPLY</text><text x="2071" y="379" fontSize="6">RESERVE</text>
      <text x="2190" y="404" fontSize="7">Pitts Tank</text>
      <text x="1976" y="788">Lake</text>
      <text x="1962" y="798" fontSize="9">Wallawalla</text>
      <text x="1992" y="952" fontSize="7">Western</text><text x="2022" y="951" fontSize="7">Murray</text>
      <text x="2275" y="1227" fontSize="6" fontStyle="italic">Bambill South Storage Tank</text>
      <text x="1886" y="675" fontSize="7">Toupnein</text><text x="1911" y="697" fontSize="7">Mullaroo</text><text x="1955" y="687" fontSize="7">Creek</text>
    </g>
    <path d="M790 1424L798 1448M888 1424L896 1448M1154 1424L1158 1448" stroke="#ddd2cb" strokeWidth="8" />
    <path d="M900 1424L904 1448" stroke="#cfe0ea" strokeWidth="8" />
    <path d="M1148 1424L1154 1448" stroke="#d9e6dc" strokeWidth="6" />
    <path d="M1648 1420L1666 1450" stroke="#ebd0df" strokeWidth="12" />
    <path d="M1648 1420L1666 1450" stroke="#f6eef3" strokeWidth="2" />
    <path d="M613 1424V1448M535 1424V1448M945 1424V1435H952V1448M1416 1424V1448M1548 1424V1448M1610 1424V1448M1710 1424V1448M1760 1424V1448M1900 1424V1448M2088 1432V1448" stroke="#e0d8d2" strokeWidth="2" />
  </MapCanvas>
);

/* ---------- forecast graph ---------- */
const X0 = 618;
const STEP = 88.25;
const BASE = 1281.5;
const KFT = 78.4;
const px = (h) => X0 + h * STEP;
const py = (kft) => BASE - kft * KFT;

const qnh = [[0, 822, '1017hPa', 594, 850], [3, 818.5, '1018hPa', 858, 814], [6, 818.5, '1018hPa', 1123, 846], [9, 826, '1016hPa', 1388, 822]];
const temp = [[0, 1210, '9°', 610, 1238], [3, 1155, '16°', 875, 1151], [6, 1124, '20°', 1140, 1152], [9, 1101, '23°', 1405, 1096]];
const hours = [[20, 6], [22, 8], [0, 10], [2, 12], [4, 14], [6, 16], [8, 18]];

const Series = ({ data, color }) => (
  <g fontSize="21">
    <polyline points={data.map(([h, y]) => `${px(h)},${y}`).join(' ')} fill="none" stroke={color} strokeWidth="4" />
    {data.map(([h, y, t, tx, ty], i) => (
      <g key={h}>
        {i === 0
          ? <circle cx={px(h)} cy={y} r="4" fill="none" stroke={color} strokeWidth="2" />
          : <circle cx={px(h)} cy={y} r="6" fill={color} />}
        <text x={tx} y={ty} fill={color}>{t}</text>
      </g>
    ))}
  </g>
);

const ForecastGraph = () => (
  <Chart viewBox="480 529 1400 895" fontFamily="Inter, sans-serif" fontSize="20" role="img" aria-label="TAF graph">
    <g stroke="#000000" strokeOpacity="0.22" strokeWidth="2">
      {Array.from({ length: 11 }, (_, i) => <path key={i} d={`M${px(i + 1)} 529V${BASE}`} />)}
      {[1, 2, 3, 4, 5, 6, 7, 9].map((k) => <path key={k} d={`M${X0} ${py(k)}H${px(12)}`} />)}
      <path d={`M${X0} 654H${px(12)}`} strokeOpacity="0.15" />
    </g>
    <path d={`M${X0} 529V${BASE}H${px(12)}V529`} fill="none" stroke="#111111" strokeWidth="2" />
    <g fill="#8a8b8d">
      {[1, 2, 3, 4, 5, 6, 7, 8, 9].map((k) => <text key={k} x="1681" y={py(k) + 9}>{k}000'</text>)}
      {hours.map(([u, l], i) => (
        <g key={l}>
          <text x={px(i * 2)} y="1321">{u}</text>
          <text x={px(i * 2)} y="1341">{l}</text>
        </g>
      ))}
      <text x="1708" y="1321">(UTC)</text>
      <text x="1708" y="1341">(Local)</text>
    </g>
    <path d="M1106.5 529V1282" stroke="#e2b04a" strokeWidth="2" />
    <circle cx="618" cy="654" r="9" fill="#d09be6" />
    <circle cx="1059" cy="654" r="12" fill="#dfbdec" />
    <g fill="none" stroke="#1a1a1a" strokeWidth="2">
      <path d="M630 654H1046" strokeDasharray="4 8.2" />
      <path d="M598 643V665L617 654ZM1039 643V665L1058 654ZM1657 643V665L1676 654Z" />
      <path d="M575 636L579 647L617 654" />
      <path d="M1009 657L1022 667L1058 654" />
      <path d="M1072 654H1656" strokeDasharray="4 8.2" />
    </g>
    <rect x="1059" y="614" width="618" height="81" rx="10" fill="#fcfa64" fillOpacity="0.4" />
    <Series data={qnh} color="#d9534f" />
    <Series data={temp} color="#4285dd" />
    <g>
      {Array.from({ length: 28 }, (_, i) => <rect key={i} x={618 + i * 16.2} y="999" width="8" height="16" rx="4" fill={i ? '#aeaeb0' : '#7d7d84'} />)}
    </g>
    <text x="618" y="1369" fontSize="28" fill="#d84e68">Valid: 11/04 18:35 Z (Data 5hrs old)</text>
  </Chart>
);

const tools = (list, tall) => list.map(([name, icon]) => (
  <ToolButton key={name} type="button" aria-label={name} $tall={tall}>{icon}</ToolButton>
));

export default function App() {
  return (
    <Screen>
      <Global />
      <Backdrop />
      <Stage>
        <Instruments>
          <Cell $flush><Compass /></Cell>
          <Cell><CellLabel>TRK</CellLabel><CellValue>329°M</CellValue></Cell>
          <Cell><CellLabel>GPS ALT</CellLabel><CellValue>19'</CellValue></Cell>
          <Cell><CellLabel>UTC</CellLabel><CellValue>01:31Z</CellValue></Cell>
          <Cell><CellLabel>GS</CellLabel><CellValue>--</CellValue></Cell>
          <Cell $last>
            <CellLabel>FIA/NXT</CellLabel>
            <Frequency>AD  130.45</Frequency>
            <Frequency>ML  118.95 (NXT)</Frequency>
            <StatusDot />
          </Cell>
          <Cell $low><CellLabel>DTG</CellLabel><CellValue>12.2<small>NM</small></CellValue></Cell>
          <Cell $low><CellLabel>BRG</CellLabel><CellValue>02</CellValue></Cell>
          <Cell $low />
          <Cell $low />
          <Cell $low />
          <RouteCell $low $last>
            <CancelButton type="button">Cancel</CancelButton>
            <CellValue $route>DCT YPPF</CellValue>
          </RouteCell>
        </Instruments>

        <Body>
          <Side>
            <Rail $open aria-label="Map tools">
              <ToolButton type="button" aria-label="Collapse">
                <Ico w={6}><path d="M34 5H55V55H5V32" /><path d="M5 4L38 38" /><path d="M22 40H42V20" strokeWidth="6" /></Ico>
              </ToolButton>
              <Rule />
              {tools(leftTools)}
              <Rule />
              <ToolButton type="button" aria-label="Fuel"><FaGasPump size={56} /></ToolButton>
              <MoreButton type="button" aria-label="More tools">
                <svg width="22" height="14" viewBox="0 0 22 14" fill="none" stroke="#fafafa" strokeWidth="3"><path d="M1 2L11 11L21 2" /></svg>
              </MoreButton>
            </Rail>
            <Dock aria-label="Map view">{tools(leftDock, true)}</Dock>
          </Side>
          <Side $end>
            <Cards>
              <CardButton type="button" aria-label="Timer">
                <Ico s={64} w={4}><circle cx="30" cy="33" r="24" /><path d="M30 33V16M50 13L54 9M30 9V1" /><circle cx="30" cy="33" r="3" fill="currentColor" /></Ico>
              </CardButton>
              <CardButton type="button" $efb>
                <span>EFB</span>
                <svg width="56" height="56" viewBox="0 0 60 60" stroke="#e3e3e3" strokeLinecap="round" aria-hidden="true">
                  <path d="M7 8L54 56" strokeWidth="9" />
                  <path d="M42 20L12 48" strokeWidth="5" />
                  <path d="M6 44L17 55" strokeWidth="7" />
                </svg>
              </CardButton>
            </Cards>
            <Rail aria-label="Chart tools">{tools(rightTools)}</Rail>
            <Dock aria-label="Planning">{tools(rightDock, true)}</Dock>
          </Side>
        </Body>
      </Stage>

      <TabBar aria-label="Main">
        {tabs.map(([name, icon]) => (
          <TabItem key={name} href={`#${name.toLowerCase()}`}>
            {icon}
            {name}
            {name === 'Settings' && (
              <Badge>
                <svg width="20" height="24" viewBox="0 0 20 24" fill="none" stroke="#f6f6f6" strokeWidth="3"><path d="M2 14L7 20L17 3" /></svg>
              </Badge>
            )}
          </TabItem>
        ))}
      </TabBar>

      <SheetLayer>
        <Sheet aria-label="Weather">
          <SheetBar>
            <BackButton type="button">
              <svg width="26" height="42" viewBox="0 0 26 42" fill="none" stroke="currentColor" strokeWidth="5" strokeLinecap="round" strokeLinejoin="round"><path d="M22 3L4 21L22 39" /></svg>
              Back
            </BackButton>
            <button type="button" aria-label="Share">
              <svg width="42" height="52" viewBox="0 0 42 52" fill="none" stroke="currentColor" strokeWidth="3" strokeLinecap="round" strokeLinejoin="round">
                <path d="M15 17H9Q2 17 2 24V43Q2 50 9 50H33Q40 50 40 43V24Q40 17 33 17H27M21 33V3M13 11L21 3L29 11" />
              </svg>
            </button>
          </SheetBar>
          <Segments>
            {['TAF', 'AREA', 'NOTAM', 'RAIM', 'TAFG', 'Plain'].map((s, i) => (
              <Segment key={s} type="button" $on={s === 'TAFG'} $rule={i < 3}>{s}</Segment>
            ))}
          </Segments>
          <Report>
            TAF YREN 041835Z 0420/0508 28006KT 9999 SCT035<br />
            <Past>FM050100</Past> <Picked>{'25008KT '}</Picked>CAVOK<br />
            RMK T 09 16 20 23 Q 1017 1018 1018 1016
          </Report>
          <Plain>Wind 8 knots from the West South West (250°).</Plain>
          <ForecastGraph />
        </Sheet>
      </SheetLayer>

      <Arrows viewBox="0 0 2360 1588" preserveAspectRatio="xMidYMin slice" fill={navy} aria-hidden="true">
        <path d="M325 358H590V338L641 363L590 388V368H325Z" />
        <path d="M319 489L439 490V470L490 495L439 520V500L319 499Z" />
        <path d="M1901 647H1713V627L1662 652L1713 677V657H1901Z" />
      </Arrows>
      <Steps start={2}>
        <li><span>2.</span><span>The selection is highlighted in the text</span></li>
        <li><span>3.</span><span>A plain Text description is also shown</span></li>
      </Steps>
      <FirstStep>
        <span>1.</span>Tap a section<br />in the Graph
      </FirstStep>
    </Screen>
  );
}
